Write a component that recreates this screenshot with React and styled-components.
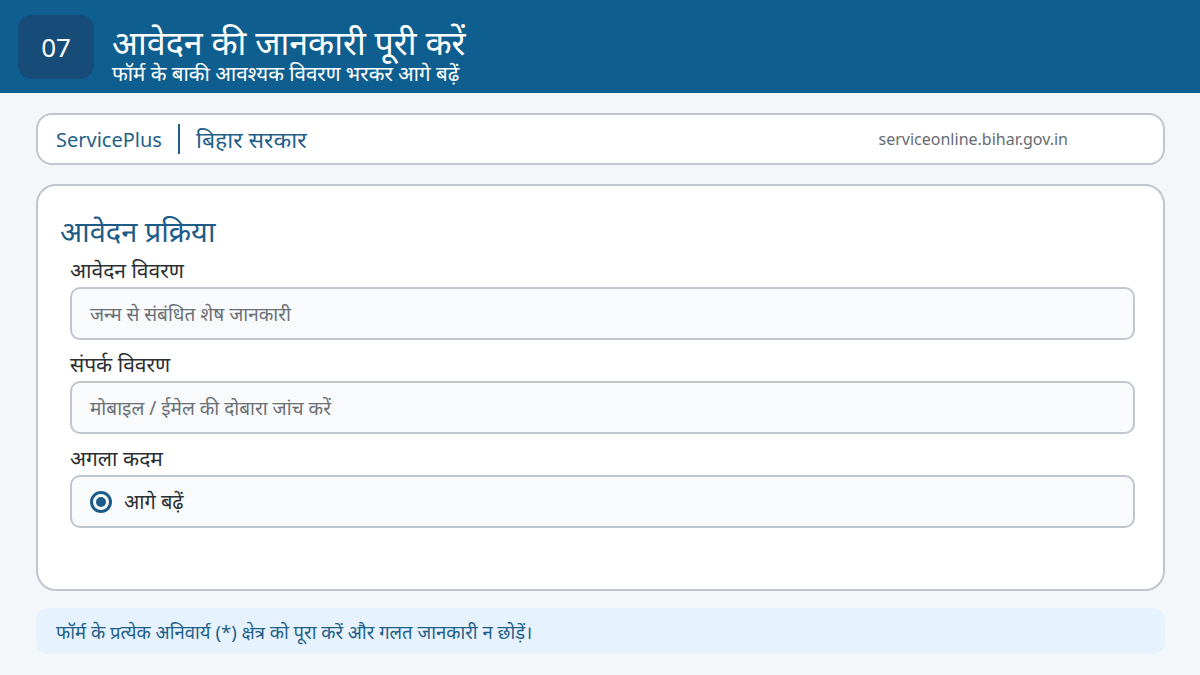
import styled, { createGlobalStyle } from "styled-components";

const GlobalStyle = createGlobalStyle`
  html, body {
    margin: 0;
    padding: 0;
    background: #f3f7fa;
    font-family: "Noto Sans", sans-serif;
  }
`

const Page = styled.div`
  width: 1200px;
  height: 675px;
  background: #f3f7fa;
  overflow: hidden;
`

const Header = styled.header`
  height: 93px;
  background: #0e5f90;
  display: flex;
  align-items: center;
  padding: 0 18px;
  box-sizing: border-box;
  gap: 18px;
`

const StepBadge = styled.div`
  width: 76px;
  height: 64px;
  border-radius: 14px;
  background: #174b78;
  color: #fff;
  font-size: 26px;
  display: flex;
  align-items: center;
  justify-content: center;
`

const HeaderText = styled.div`
  display: flex;
  flex-direction: column;
  color: #fff;
  margin-top: 14px;
  .title {
    font-size: 34px;
    line-height: 38px;
  }
  .subtitle {
    font-size: 20.5px;
    line-height: 24px;
  }
`

const Content = styled.main`
  padding: 20px 35px 0 36px;
  display: flex;
  flex-direction: column;
`

const Card = styled.section`
  background: #fff;
  border: 2px solid #bfc6cd;
  border-radius: ${p => p.$radius || 16}px;
  box-sizing: border-box;
`

const Brand = styled(Card)`
  height: 52px;
  display: flex;
  align-items: center;
  padding: 0 95px 0 18px;
  .name {
    font-size: 20px;
    color: #1f5f8a;
  }
  .divider {
    width: 2px;
    height: 30px;
    background: #1f5f8a;
    margin: 0 16px;
  }
  .state {
    font-size: 23px;
    color: #1f5f8a;
  }
  .url {
    margin-left: auto;
    font-size: 16px;
    color: #666c72;
  }
`

const FormCard = styled(Card)`
  margin-top: 19px;
  height: 407px;
  padding: 24px 28px 0 22px;
`

const FormTitle = styled.h2`
  margin: 0 0 4px;
  font-size: 29px;
  font-weight: 400;
  line-height: 42px;
  color: #1d5c88;
`

const Field = styled.div`
  padding-left: 10px;
  margin-bottom: 10px;
`

const Label = styled.div`
  font-size: 21px;
  line-height: 28px;
  color: #2c2f33;
  margin-bottom: 3px;
`

const InputBox = styled.div`
  height: 53px;
  box-sizing: border-box;
  border: 2px solid #bfc6cd;
  border-radius: 10px;
  background: #f8fafc;
  display: flex;
  align-items: center;
  padding: 0 18px;
  gap: 12px;
  font-size: ${p => p.$filled ? 20 : 19}px;
  color: ${p => p.$filled ? "#2c2f33" : "#6b7076"};
`

const Radio = styled.span`
  width: 22px;
  height: 22px;
  box-sizing: border-box;
  border-radius: 50%;
  border: 3px solid #1d5c88;
  display: flex;
  align-items: center;
  justify-content: center;
  &::after {
    content: "";
    width: 10px;
    height: 10px;
    border-radius: 50%;
    background: #1d5c88;
  }
`

const Note = styled.div`
  margin-top: 17px;
  height: 46px;
  border-radius: 12px;
  background: #e6f2fd;
  display: flex;
  align-items: center;
  padding: 0 20px;
  font-size: 18.5px;
  color: #1f5f8a;
`

const App = () => {
  return (
    <>
      <GlobalStyle />
      <Page>
        <Header>
          <StepBadge>07</StepBadge>
          <HeaderText>
            <span className="title">आवेदन की जानकारी पूरी करें</span>
            <span className="subtitle">फॉर्म के बाकी आवश्यक विवरण भरकर आगे बढ़ें</span>
          </HeaderText>
        </Header>
        <Content>
          <Brand>
            <span className="name">ServicePlus</span>
            <span className="divider" />
            <span className="state">बिहार सरकार</span>
            <span className="url">serviceonline.bihar.gov.in</span>
          </Brand>
          <FormCard $radius={20}>
            <FormTitle>आवेदन प्रक्रिया</FormTitle>
            <Field>
              <Label>आवेदन विवरण</Label>
              <InputBox>जन्म से संबंधित शेष जानकारी</InputBox>
            </Field>
            <Field>
              <Label>संपर्क विवरण</Label>
              <InputBox>मोबाइल / ईमेल की दोबारा जांच करें</InputBox>
            </Field>
            <Field>
              <Label>अगला कदम</Label>
              <InputBox $filled>
                <Radio />
                आगे बढ़ें
              </InputBox>
            </Field>
          </FormCard>
          <Note>फॉर्म के प्रत्येक अनिवार्य (*) क्षेत्र को पूरा करें और गलत जानकारी न छोड़ें।</Note>
        </Content>
      </Page>
    </>
  )
}

export default App;
